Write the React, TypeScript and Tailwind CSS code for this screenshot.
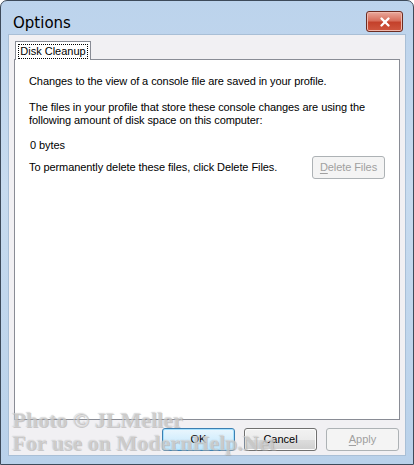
import { X } from 'lucide-react'

const uiFont = { fontFamily: '"Liberation Sans", Arial, sans-serif' }

function DialogButton({
  label,
  accel,
  variant,
}: {
  label: string
  accel?: number
  variant: 'default' | 'normal' | 'disabled'
}) {
  const text =
    accel === undefined ? (
      label
    ) : (
      <>
        {label.slice(0, accel)}
        <span className="underline underline-offset-2">{label[accel]}</span>
        {label.slice(accel + 1)}
      </>
    )

  if (variant === 'disabled') {
    return (
      <div className="flex h-[23px] w-[73px] items-center justify-center rounded-[3px] border border-[#adb2b5] bg-[#f4f4f4] text-[11px] text-[#a0a0a0]">
        {text}
      </div>
    )
  }
  if (variant === 'default') {
    return (
      <div className="flex h-[23px] w-[73px] items-center justify-center rounded-[3px] border border-[#3c7fb1] bg-gradient-to-b from-[#eaf6fd] to-[#bee6fd] text-[11px] text-black shadow-[inset_0_0_0_1px_#a6e1ff]">
        {text}
      </div>
    )
  }
  return (
    <div className="flex h-[23px] w-[73px] items-center justify-center rounded-[3px] border border-[#707070] bg-[linear-gradient(to_bottom,#f2f2f2_0%,#ebebeb_50%,#dddddd_51%,#cfcfcf_100%)] text-[11px] text-black shadow-[inset_0_0_0_1px_#fcfcfc]">
      {text}
    </div>
  )
}

export default function App() {
  return (
    <div
      className="relative h-[465px] w-[414px] overflow-hidden rounded-t-[7px] border border-[#3d4a5a] bg-[linear-gradient(to_bottom,#bcd3ec_0%,#c7dbef_40%,#b9d1ea_100%)]"
      style={uiFont}
    >
      {/* Title bar */}
      <div className="flex h-[33px] items-center justify-between pl-[12px] pr-[10px]">
        <span
          className="pt-[12px] text-[15px] text-black"
          style={{ fontFamily: '"Comic Sans MS", "DejaVu Sans", sans-serif' }}
        >
          Options
        </span>
        <div className="mb-[2px] flex h-[21px] w-[37px] items-center justify-center self-end rounded-[3px] border border-[#6d2c22] bg-[linear-gradient(to_bottom,#e9a99c_0%,#d86f5c_45%,#c4412b_55%,#d0573f_100%)] shadow-[inset_0_0_0_1px_#f0b8ac]">
          <X className="h-[14px] w-[14px] text-white" strokeWidth={4} />
        </div>
      </div>

      {/* Client area */}
      <div className="ml-[7px] mr-[7px] flex h-[422px] flex-col border border-[#a9bfd6] bg-[#f1f0f3] pl-[5px] pr-[5px] pt-[6px]">
        <div className="relative z-10 -mb-px ml-px flex h-[19px] w-[76px] items-center border border-b-0 border-[#898c95] bg-white px-[2px] pt-[1px]">
          <div className="flex h-[15px] w-full items-center justify-center border border-dotted border-black text-[11px] text-black">
            Disk Cleanup
          </div>
        </div>

        <div className="flex h-[361px] w-[386px] flex-col border border-[#898c95] bg-white pl-[14px] pr-[14px] pt-[15px] text-[11px] leading-[13px] tracking-[-0.08px] text-black">
          <p>Changes to the view of a console file are saved in your profile.</p>
          <p className="mt-[13px]">
            The files in your profile that store these console changes are using the
            <br />
            following amount of disk space on this computer:
          </p>
          <p className="mt-[12px] pl-[1px]">0 bytes</p>
          <div className="mt-[4px] flex items-center justify-between">
            <span>To permanently delete these files, click Delete Files.</span>
            <DialogButton label="Delete Files" accel={0} variant="disabled" />
          </div>
        </div>

        <div className="mt-[8px] flex justify-end gap-[9px] pr-[1px]">
          <DialogButton label="OK" variant="default" />
          <DialogButton label="Cancel" variant="normal" />
          <DialogButton label="Apply" accel={0} variant="disabled" />
        </div>
      </div>

      {/* Watermark over the screenshot */}
      <div
        className="pointer-events-none absolute left-[11px] top-[407px] flex flex-col text-[22px] font-bold leading-[23px] text-white/40"
        style={{
          fontFamily: '"Liberation Serif", "DejaVu Serif", serif',
          textShadow: '0 0 1px rgba(150,150,150,0.6), 1px 1px 0 rgba(170,170,170,0.55)',
        }}
      >
        <span>Photo © JLMeller</span>
        <span>For use on ModernHelp.Net</span>
      </div>
    </div>
  )
}
